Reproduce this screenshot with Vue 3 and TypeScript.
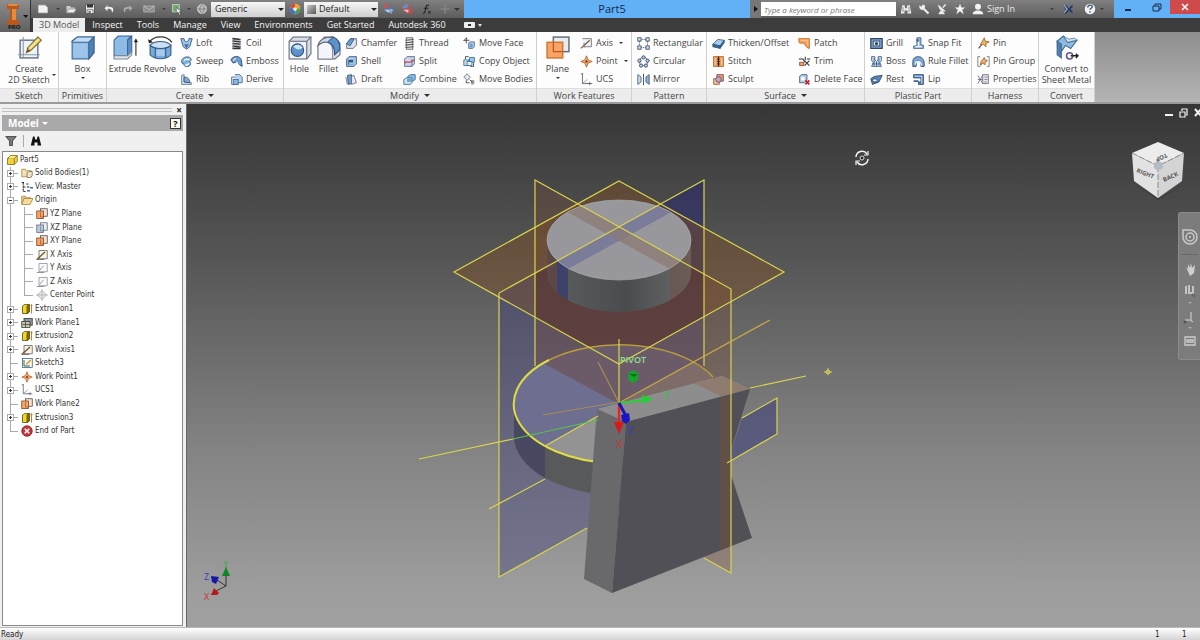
<script setup lang="ts">
import { ref } from 'vue'

interface Tool {
  label: string
  icon: string
  menu?: boolean
  corner?: boolean
}
interface Column {
  big?: boolean
  tools: Tool[]
}
interface Panel {
  id: string
  title: string
  menu?: boolean
  columns: Column[]
}
interface Node {
  label: string
  icon: string
  toggle?: '+' | '-'
  child?: boolean
  last?: boolean
  root?: boolean
}

const icons: Record<string, string> = {
  sketch: '<rect x="3" y="5" width="17" height="17" fill="#eef3f8" stroke="#68788a" stroke-width="1.4"/><path d="M6 2v21M1 19h21" stroke="#8c98a6" fill="none"/><path d="M9 17l1.500-5L20 2l3.500 3L13 15z" fill="#f1cf6b" stroke="#7c6a33"/><path d="M9 17l1.500-5 2.500 3z" fill="#7b4d28"/><path d="M11 14L21 4" stroke="#fff3b8"/>',
  box: '<path d="M2 6l5-4h16v15l-5 6H2z" fill="#7fb0de" stroke="#3c6693"/><path d="M2 6l5-4h16l-5 5H2z" fill="#c2dcf3" stroke="#3c6693"/><path d="M18 7l5-5v15l-5 6z" fill="#4f82b8" stroke="#3c6693"/><path d="M3 8h14v14H3z" fill="#9dc4ea"/>',
  extrude: '<path d="M1 5l4-4h12l-3 4v15H1z" fill="#8dbbe6" stroke="#3c6693"/><path d="M14 5l4-4v15l-4 5z" fill="#5c8fc2" stroke="#3c6693"/><path d="M1 20h13l4-4v3l-4 4H1z" fill="#dde5ec" stroke="#7b8794"/><path d="M22 20V5" fill="none" stroke="#222"/><path d="M20 7l2-4 2 4z" fill="#222"/>',
  revolve: '<path d="M1 7C6 0 18 0 23 7" fill="none" stroke="#333" stroke-width="1.200"/><path d="M0 4l1 4 4-1z" fill="#222"/><path d="M2 10c5 4 15 4 20 0v9c-5 5-15 5-20 0z" fill="#77a9da" stroke="#33597f"/><path d="M2 10c4-5 16-5 20 0-5 4-15 4-20 0z" fill="#c9dff3" stroke="#33597f"/><path d="M7 12v10M17 12v10" stroke="#33597f"/><path d="M8 14h8v6H8z" fill="#a7cbee"/>',
  hole: '<path d="M2 6l4-4h17v16l-4 5H2z" fill="#d5dde6" stroke="#667"/><path d="M2 6h17v17M19 6l4-4" fill="none" stroke="#667"/><path d="M3 7h15v15H3z" fill="#f2f5f8"/><circle cx="10" cy="14.500" r="6" fill="#5d93cc" stroke="#2c4f7a"/><path d="M6 11a6 6 0 0 1 9 1c-3 3-6 2-9-1z" fill="#cfe3f6"/>',
  fillet: '<path d="M2 10l6-8h8l7 6v11l-5 4H2z" fill="#d8dfe7" stroke="#667"/><path d="M2 10c3-2 6-4 9-3 4 1 5 5 5 9v7H2z" fill="#f3f5f8" stroke="#889"/><path d="M11 7l5-5c5 1 7 6 7 12l-5 5c0-6-2-11-7-12z" fill="#5d93cc" stroke="#2c4f7a"/><path d="M2 10c1-5 5-8 14-8l-5 5c-4-1-7 1-9 3z" fill="#c6dbef" stroke="#667"/>',
  plane: '<rect x="8" y="2" width="15" height="14" fill="#e8ecf1" stroke="#5d6d7e" stroke-width="1.400"/><rect x="2" y="7" width="15" height="15" fill="#f6a566" stroke="#d5742c" stroke-width="1.400"/><path d="M8 7v9h9" fill="none" stroke="#c2571a" stroke-width="1.200"/>',
  convert: '<path d="M3 6l6-5 4 6 9-2-6 8-5-3-6 9z" fill="#8db9e2" stroke="#41698f"/><path d="M3 6l4 3v13l-4-3z" fill="#4f7fae" stroke="#41698f"/><path d="M9 1l4 6 9-2-2-2-6 1z" fill="#d3e6f7" stroke="#41698f" stroke-width=".7"/><circle cx="15" cy="20" r="3" fill="#fff" stroke="#63579a" stroke-width="1.500"/><path d="M16 20h7M21 18l2 2-2 2" stroke="#222" stroke-width="1.400" fill="none"/>',
  loft: '<path d="M1 2h4c0 5 6 5 6 0h4l-3 10-4 3-4-3z" fill="#9cc4ea" stroke="#2b4d78"/><path d="M5 9l3 5 3-5" fill="#456f9f"/>',
  sweep: '<path d="M2 7c1-5 9-6 11-3 2 2 0 4-2 4 3 1 3 5-1 6-3 1-6-1-5-3-2 0-4-2-3-4z" fill="#84b1de" stroke="#2b4d78"/><path d="M5 7c2-2 5-2 7-1M6 12c2 1 4 0 5-2" fill="none" stroke="#fff" stroke-width="1.500"/>',
  rib: '<path d="M2 3l3-1v9l9 1v2H2z" fill="#dce4ec" stroke="#556f8b"/><path d="M5 5c5 0 7 3 7 7l-7-1z" fill="#7eaddb" stroke="#2b4d78"/>',
  coil: '<path d="M3 2l10 1M3 5l10 1M3 8l10 1M3 11l10 1M3 14h10" stroke="#333" stroke-width="2"/><path d="M4 3v11M12 3v10" stroke="#889"/>',
  emboss: '<path d="M1 6c3-6 12-5 13 0l1 8-5-3-1-3-5 2z" fill="#6b9ccd" stroke="#23426a"/><path d="M4 7l3-3M8 8l3 5" stroke="#e4f0fa" stroke-width="1.500"/>',
  derive: '<path d="M2 5h8v9H2z" fill="#e6edf4" stroke="#557"/><path d="M6 2h6l3 3v7H9" fill="#b5d2ee" stroke="#3c6693"/><rect x="4" y="8" width="6" height="6" fill="#8ab6e2" stroke="#3c6693"/>',
  chamfer: '<path d="M2 8l5-6h7v8l-4 4H2z" fill="#dbe4ed" stroke="#556"/><path d="M2 8l5-6 4 1-5 8z" fill="#6ea0d1" stroke="#2b4d78"/>',
  shell: '<path d="M2 5l3-3h9v9l-3 3H2z" fill="#a5c6e7" stroke="#2b4d78"/><path d="M4 6h6v6H4z" fill="#2f5586"/><path d="M5 9h5v3H5z" fill="#9dc3ea"/>',
  draft: '<path d="M3 3l5-1v11l-4 1z" fill="#6f9fcf" stroke="#2b4d78"/><path d="M8 4l3-1 3 9-6 2z" fill="#e4eaf0" stroke="#667"/><path d="M1 5l2 9" stroke="#667"/>',
  thread: '<rect x="4" y="1" width="8" height="14" fill="#eee" stroke="#555"/><path d="M3 4l10-1M3 7l10-1M3 10l10-1M3 13l10-1" stroke="#555" stroke-width="1.300"/>',
  split: '<path d="M2 5l3-3h9v9l-3 3H2z" fill="#c4d8ed" stroke="#557"/><path d="M3 6h7v3H3z" fill="#f0d4d8"/><path d="M2 10c3-4 6 2 12-4" stroke="#c04452" fill="none" stroke-width="1.500"/><path d="M11 5v9" stroke="#557"/>',
  combine: '<path d="M6 4l3-2h6v6l-3 2H6z" fill="#8bbbe4" stroke="#2b6a8a"/><path d="M1 8l3-2h7v6l-2 2H1z" fill="#d3e3f2" stroke="#2b6a8a"/><path d="M5 7h5v4H5z" fill="#6aa4d6"/>',
  moveface: '<path d="M7 7l2-1h5v6l-2 2H7z" fill="#bcd6ef" stroke="#3c6693"/><path d="M4 1v7M1 4h7M3 2l1-1 1 1M2 3L1 4l1 1" stroke="#333" fill="none"/><path d="M8 8h4v5H8z" fill="#6fa0d2"/>',
  copy: '<path d="M1 6h6v7H1z" fill="#c9dff3" stroke="#2b6a8a"/><path d="M8 3h6v6H8z" fill="#9cc6ea" stroke="#2b6a8a"/><path d="M3 5V2h4M13 10v4H9" fill="none" stroke="#333"/><path d="M5 8h6v5H5z" fill="#e8f1f9" stroke="#2b6a8a"/>',
  movebodies: '<path d="M5 1l4 4-4 4-4-4z" fill="#e3e8ee" stroke="#667"/><path d="M8 8l5 5M10 10h4M11 9v5M4 9v3h4" stroke="#333" fill="none"/><circle cx="12" cy="12" r="2" fill="#89a" />',
  axis: '<path d="M3 2h11v10H5" fill="#eef1f5" stroke="#667"/><path d="M1 14L12 4" stroke="#7a5a3c" stroke-width="1.600"/><path d="M5 7v6" stroke="#667"/>',
  point: '<path d="M8 1l2 5 5 2-5 2-2 5-2-5-5-2 5-2z" fill="#f0a974" stroke="#b0602a"/><circle cx="8" cy="8" r="1.500" fill="#8b3f12"/>',
  ucs: '<path d="M3 1v12h12" fill="none" stroke="#556"/><path d="M3 13l6-5" stroke="#889"/><path d="M1 1h3M12 11v4M9 12l1 1" stroke="#556"/>',
  rect: '<path d="M3 3h10v10H3z" fill="none" stroke="#556" stroke-dasharray="2 1"/><g fill="#dce8f4" stroke="#2b3f5c"><rect x="1" y="1" width="4" height="4"/><rect x="11" y="1" width="4" height="4"/><rect x="1" y="11" width="4" height="4"/><rect x="11" y="11" width="4" height="4"/></g>',
  circular: '<circle cx="8" cy="8" r="5" fill="none" stroke="#556"/><g fill="#bcd3ea" stroke="#23395c"><circle cx="8" cy="3" r="2"/><circle cx="3" cy="7" r="2"/><circle cx="13" cy="7" r="2"/><circle cx="5" cy="13" r="2"/><circle cx="11" cy="13" r="2"/></g>',
  mirror: '<path d="M1 2l4 3v6l-4 3z" fill="#cfe0f0" stroke="#3c5673"/><path d="M15 2l-4 3v6l4 3z" fill="#8db4dc" stroke="#3c5673"/><path d="M8 1v14" stroke="#333"/>',
  thicken: '<path d="M1 9l6-6 8 1-5 7z" fill="#a9cbec" stroke="#2d5b84"/><path d="M1 9l9 2v3l-9-2zM10 11l5-7v3l-5 7z" fill="#37698f" stroke="#2d5b84"/>',
  stitch: '<rect x="2" y="2" width="12" height="12" fill="#f4a15d" stroke="#b5601f"/><path d="M8 2v12" stroke="#222" stroke-width="1.500"/><path d="M6 5h4M6 8h4M6 11h4" stroke="#333"/><path d="M4 4v8M12 4v8" stroke="#fbd9bb" />',
  sculpt: '<path d="M2 7h7v7H2z" fill="#f6c095" stroke="#a65a2a"/><path d="M6 2h8v8H6z" fill="#f09a63" stroke="#734a55"/><circle cx="8" cy="8" r="3.500" fill="#b3a9c9" stroke="#6b4860"/>',
  patch: '<path d="M1 2h13v12c-4 0-5-5-7-6-3-1-6 1-6-3z" fill="#f5a05a" stroke="#c0621d"/><path d="M3 4h9v6" fill="none" stroke="#fbd0aa"/>',
  trim: '<path d="M1 5h5l3 4M15 5h-4M9 2v4" stroke="#333" fill="none" stroke-width="1.300"/><path d="M2 9h5v4H2z" fill="#f2a56f" stroke="#7b4423"/><path d="M8 7l6 6M8 13l6-6" stroke="#444" stroke-width="1.500"/>',
  delface: '<path d="M2 4l2-2h7v7l-3 3H2z" fill="#b8cfe7" stroke="#35577f"/><path d="M4 5h4v4H4z" fill="#fff"/><path d="M9 9l5 5M14 9l-5 5" stroke="#c4202a" stroke-width="2"/>',
  grill: '<rect x="1" y="2" width="14" height="12" fill="#7fa3cb" stroke="#2c4567" stroke-width="1.500"/><rect x="4" y="5" width="8" height="6" fill="#e3eefa" stroke="#2c4567"/><circle cx="8" cy="8" r="2" fill="#2c4567"/>',
  boss: '<path d="M2 2h4v4l2 2 2-2V2h4v5l-2 2 2 5H2l2-5-2-2z" fill="#cfe0f1" stroke="#35577f"/><path d="M5 4v9M11 4v9M3 11h10M8 8v6" stroke="#35577f"/>',
  rest: '<path d="M1 7l5-3 9-1-4 8-8 3z" fill="#5b8abd" stroke="#1f3d63"/><ellipse cx="6" cy="9" rx="3" ry="2" fill="#e1edf8" stroke="#1f3d63"/>',
  snap: '<path d="M6 1h5v9h3v4H2v-3h4z" fill="#9dc2e8" stroke="#35577f"/><path d="M8 3v8M4 12h8" stroke="#fff" stroke-width="1.400"/><circle cx="7" cy="4" r="2" fill="#4e7aa8"/>',
  rule: '<path d="M1 14V8c0-4 3-6 7-6s7 4 7 8v4h-4c0-5-1-7-5-7l-1 7z" fill="#7aa7d5" stroke="#1f3d63"/><path d="M4 12c0-5 6-6 8 1" fill="none" stroke="#e7f1fb" stroke-width="1.600"/>',
  lip: '<path d="M2 2h12v12H8v-3h3V6H2z" fill="#6290c2" stroke="#1f3d63"/><path d="M3 4h9v9" fill="none" stroke="#e1edf8"/><path d="M2 9h6v2H2z" fill="#35577f"/>',
  pin: '<path d="M2 14l4-5" stroke="#555" stroke-width="1.500"/><path d="M9 1l1 4 5 1-4 2 0 4-3-3-4 1 2-4z" fill="#edb169" stroke="#9d6427"/>',
  pingroup: '<path d="M4 2H1v12h3M12 2h3v12h-3" fill="none" stroke="#69707a"/><path d="M4 13l3-3" stroke="#555"/><path d="M9 3l1 3 3 1-3 2v3l-3-2-3 2 1-4z" fill="#edb169" stroke="#9d6427"/>',
  props: '<path d="M7 2h7v11H7z" fill="#e7ebf0" stroke="#667"/><path d="M9 5h4M9 8h4M9 11h3" stroke="#778"/><path d="M1 3l6 10M7 3L1 13M1 8h6" stroke="#667"/>',
  part: '<path d="M2 6l4-4h9v8l-4 4H2z" fill="#f0d23b" stroke="#7b6512"/><path d="M2 6h9v8M11 6l4-4" fill="none" stroke="#7b6512"/><path d="M3 6l4-3h6l-3 3z" fill="#fff0a0"/>',
  bodies: '<path d="M1 3h5l1 2h7v8H1z" fill="#f3dfae" stroke="#a18240"/><path d="M8 8l2-2h5v5l-2 3H8z" fill="#ece4c4" stroke="#6f6951"/>',
  view: '<path d="M3 2v12h3M3 8h4M1 2h4M7 4h3" stroke="#333" stroke-width="1.500" fill="none" stroke-dasharray="3 1"/><path d="M8 8h3M12 9h4M8 13h4" stroke="#3a6ea5" stroke-width="2"/>',
  folder: '<path d="M1 3h5l1 2h6v2H5l-4 6z" fill="#e9c877" stroke="#a0823b"/><path d="M4 6h12l-4 8H1z" fill="#f6dd9c" stroke="#a0823b"/>',
  tplane: '<rect x="6" y="1" width="9" height="10" fill="#f5e2d3" stroke="#444"/><rect x="1" y="4" width="9" height="10" fill="#f3a76c" stroke="#7d3d12"/><path d="M6 6v6h4" stroke="#b2571c" fill="none"/>',
  tplaneb: '<rect x="6" y="1" width="9" height="10" fill="#e6ebf3" stroke="#667"/><rect x="1" y="4" width="9" height="10" fill="#b9c9de" stroke="#667"/><path d="M6 6v6h4" stroke="#71839c" fill="none"/>',
  taxis: '<path d="M4 2h11v11H4z" fill="#f8f4e8" stroke="#555"/><path d="M1 14L12 4" stroke="#6d5224" stroke-width="1.700"/><path d="M1 14h10" stroke="#555"/>',
  taxisb: '<path d="M4 2h11v11H4z" fill="#fafafa" stroke="#889"/><path d="M5 11l5-6" stroke="#777"/><path d="M1 14h10" stroke="#777"/>',
  cpoint: '<path d="M8 2l6 6-6 6-6-6z" fill="#eee" stroke="#9a9a9a"/><path d="M8 0v16M0 8h16" stroke="#aaa"/>',
  extr: '<path d="M2 4l3-2h6v10l-3 2H2z" fill="#f2d61f" stroke="#4d430a"/><path d="M8 4v10l3-2V2z" fill="#8a7a10" stroke="#4d430a"/><path d="M14 14V3M13 4l1-2 1 2" stroke="#c46a28" stroke-width="1.200" fill="none"/>',
  wplane: '<rect x="4" y="2" width="11" height="9" fill="#8998a6" stroke="#333"/><rect x="1" y="6" width="11" height="8" fill="#c9c39e" stroke="#333"/><path d="M2 10h10M6 6v8" stroke="#345"/>',
  tsketch: '<rect x="2" y="2" width="13" height="12" fill="#fbfbf2" stroke="#335b8a"/><path d="M4 4v8h8" stroke="#2b6a3a" fill="none" stroke-width="1.300"/><path d="M7 10l6-6" stroke="#d69a2a" stroke-width="2.200"/>',
  end: '<circle cx="8" cy="8" r="7" fill="#c8373c" stroke="#6e1216"/><path d="M5 5l6 6M11 5l-6 6" stroke="#fff" stroke-width="2"/>',
  new: '<path d="M2 3h9l3 3v7H2z" fill="#f2f2f2" stroke="#ccc"/>',
  open: '<path d="M2 4h5l1 2h5v2H5l-3 5z" fill="#ccc"/><path d="M5 8h10l-3 5H2z" fill="#eee" stroke="#999"/>',
  save: '<path d="M2 2h12v12H2z" fill="#e8e8e8" stroke="#444"/><path d="M4 2h8v4H4z" fill="#333"/><path d="M4 9h8v5H4z" fill="#fff" stroke="#555"/><path d="M6 11h3v2H6z" fill="#333"/>',
  undo: '<path d="M6 3L2 7l4 4V8c4-1 6 1 6 5 4-5 1-9-6-8z" fill="#eee"/>',
  redo: '<path d="M10 3l4 4-4 4V8c-4-1-6 1-6 5-4-5-1-9 6-8z" fill="#aaa"/>',
  print: '<path d="M1 4h14v8H1z" fill="#8a8a8a" stroke="#bbb"/><path d="M1 4l7 5 7-5" stroke="#ccc" fill="none"/>',
  select: '<path d="M2 2h9v10H2z" fill="#79a878" stroke="#c9e2c5"/><path d="M7 6l7 5-3 1 2 3-2 1-2-4-2 2z" fill="#eee" stroke="#333" stroke-width=".7"/>',
  globe: '<circle cx="8" cy="8" r="6" fill="#bbb" stroke="#e5e5e5"/><path d="M2 8h12M8 2c-4 4-4 8 0 12 4-4 4-8 0-12" stroke="#777" fill="none"/>',
  ball: '<circle cx="8" cy="8" r="7" fill="#eee"/><path d="M8 8L1 6a7 7 0 0 1 7-5z" fill="#d34d3e"/><path d="M8 8V1a7 7 0 0 1 7 6z" fill="#e9a431"/><path d="M8 8l7-1a7 7 0 0 1-6 8z" fill="#47a04a"/><path d="M8 8l1 7a7 7 0 0 1-8-9z" fill="#4472c0"/><circle cx="8" cy="8" r="2.500" fill="#f4e9c8"/>',
  ballb: '<circle cx="8" cy="7" r="6" fill="#5577a9"/><path d="M8 7L2 7a6 6 0 0 1 9-5z" fill="#c25950"/><path d="M3 9h9l-3 4z" fill="#c9cfdb"/><path d="M9 10h6M12 8v6" stroke="#8ab2e2" stroke-width="2"/>',
  ballr: '<circle cx="8" cy="7" r="6" fill="#a85858"/><path d="M8 7L2 7a6 6 0 0 1 9-5z" fill="#688bc2"/><path d="M3 9h9l-3 4z" fill="#d9c9c9"/><path d="M10 9l5 5M15 9l-5 5" stroke="#e04040" stroke-width="2"/>',
  fx: '<path d="M4 14c3 0 3-4 4-8 0-3 2-4 4-3M5 7h6M11 11l3 3M14 11l-3 3" fill="none" stroke="#222" stroke-width="1.400"/>',
  plus: '<path d="M8 2v12M2 8h12" stroke="#858585" stroke-width="2"/>',
  binoc: '<path d="M3 3h3l1 4h2l1-4h3l2 11h-5v-4H6v4H1z" fill="#eee"/><path d="M4 5v7M12 5v7" stroke="#777"/>',
  wrench: '<path d="M2 3l3 2 1-3c3 0 4 2 3 5l6 6-2 2-6-6C3 10 1 7 2 3z" fill="#eee"/>',
  dish: '<path d="M3 2l10 9c-5 2-10-3-10-9zM6 10l-3 5h9l-2-3z" fill="#eee"/><path d="M9 6l4-4" stroke="#eee" stroke-width="2"/>',
  star: '<path d="M8 1l2 5h5l-4 3 2 6-5-4-5 4 2-6-4-3h5z" fill="#f2f2f2"/>',
  user: '<circle cx="8" cy="5" r="4" fill="#f2f2f2"/><path d="M1 15c0-4 3-4 5-5h4c2 1 5 1 5 5z" fill="#f2f2f2"/>',
  exch: '<path d="M2 3h4l3 4 5-5v4l-3 2 3 3v3l-5-4-3 4H2l3-6z" fill="#26396f"/><path d="M3 3l4 5-4 5" fill="none" stroke="#dfe6fa" stroke-width="1.300"/>',
  help: '<circle cx="8" cy="8" r="7" fill="#f2f2f2"/><path d="M5 6c0-4 6-4 6-1 0 2-3 2-3 4M8 11v2" stroke="#3b4f75" stroke-width="1.800" fill="none"/>',
  filter: '<path d="M1 2h14l-5 6v6H6V8z" fill="#777" stroke="#333"/>',
  find: '<path d="M4 2h2l1 4h2l1-4h2l3 12h-5v-4H6v4H1z" fill="#111"/>',
}

const panels: Panel[] = [
  { id: 'sketch', title: 'Sketch', columns: [{ big: true, tools: [{ label: 'Create\n2D Sketch', icon: 'sketch', corner: true }] }] },
  { id: 'prim', title: 'Primitives', columns: [{ big: true, tools: [{ label: 'Box', icon: 'box', menu: true }] }] },
  {
    id: 'create', title: 'Create', menu: true, columns: [
      { big: true, tools: [{ label: 'Extrude', icon: 'extrude' }] },
      { big: true, tools: [{ label: 'Revolve', icon: 'revolve' }] },
      { tools: [{ label: 'Loft', icon: 'loft' }, { label: 'Sweep', icon: 'sweep' }, { label: 'Rib', icon: 'rib' }] },
      { tools: [{ label: 'Coil', icon: 'coil' }, { label: 'Emboss', icon: 'emboss' }, { label: 'Derive', icon: 'derive' }] },
    ],
  },
  {
    id: 'modify', title: 'Modify', menu: true, columns: [
      { big: true, tools: [{ label: 'Hole', icon: 'hole' }] },
      { big: true, tools: [{ label: 'Fillet', icon: 'fillet' }] },
      { tools: [{ label: 'Chamfer', icon: 'chamfer' }, { label: 'Shell', icon: 'shell' }, { label: 'Draft', icon: 'draft' }] },
      { tools: [{ label: 'Thread', icon: 'thread' }, { label: 'Split', icon: 'split' }, { label: 'Combine', icon: 'combine' }] },
      { tools: [{ label: 'Move Face', icon: 'moveface' }, { label: 'Copy Object', icon: 'copy' }, { label: 'Move Bodies', icon: 'movebodies' }] },
    ],
  },
  {
    id: 'work', title: 'Work Features', columns: [
      { big: true, tools: [{ label: 'Plane', icon: 'plane', menu: true }] },
      { tools: [{ label: 'Axis', icon: 'axis', menu: true }, { label: 'Point', icon: 'point', menu: true }, { label: 'UCS', icon: 'ucs' }] },
    ],
  },
  {
    id: 'pattern', title: 'Pattern', columns: [
      { tools: [{ label: 'Rectangular', icon: 'rect' }, { label: 'Circular', icon: 'circular' }, { label: 'Mirror', icon: 'mirror' }] },
    ],
  },
  {
    id: 'surface', title: 'Surface', menu: true, columns: [
      { tools: [{ label: 'Thicken/Offset', icon: 'thicken' }, { label: 'Stitch', icon: 'stitch' }, { label: 'Sculpt', icon: 'sculpt' }] },
      { tools: [{ label: 'Patch', icon: 'patch' }, { label: 'Trim', icon: 'trim' }, { label: 'Delete Face', icon: 'delface' }] },
    ],
  },
  {
    id: 'plastic', title: 'Plastic Part', columns: [
      { tools: [{ label: 'Grill', icon: 'grill' }, { label: 'Boss', icon: 'boss' }, { label: 'Rest', icon: 'rest' }] },
      { tools: [{ label: 'Snap Fit', icon: 'snap' }, { label: 'Rule Fillet', icon: 'rule' }, { label: 'Lip', icon: 'lip' }] },
    ],
  },
  {
    id: 'harness', title: 'Harness', columns: [
      { tools: [{ label: 'Pin', icon: 'pin' }, { label: 'Pin Group', icon: 'pingroup' }, { label: 'Properties', icon: 'props' }] },
    ],
  },
  { id: 'convert', title: 'Convert', columns: [{ big: true, tools: [{ label: 'Convert to\nSheet Metal', icon: 'convert' }] }] },
]

const tabs = ['3D Model', 'Inspect', 'Tools', 'Manage', 'View', 'Environments', 'Get Started', 'Autodesk 360']
const activeTab = ref('3D Model')

const nodes: Node[] = [
  { label: 'Part5', icon: 'part', root: true },
  { label: 'Solid Bodies(1)', icon: 'bodies', toggle: '+' },
  { label: 'View: Master', icon: 'view', toggle: '+' },
  { label: 'Origin', icon: 'folder', toggle: '-' },
  { label: 'YZ Plane', icon: 'tplane', child: true },
  { label: 'XZ Plane', icon: 'tplaneb', child: true },
  { label: 'XY Plane', icon: 'tplane', child: true },
  { label: 'X Axis', icon: 'taxis', child: true },
  { label: 'Y Axis', icon: 'taxisb', child: true },
  { label: 'Z Axis', icon: 'taxisb', child: true },
  { label: 'Center Point', icon: 'cpoint', child: true, last: true },
  { label: 'Extrusion1', icon: 'extr', toggle: '+' },
  { label: 'Work Plane1', icon: 'wplane', toggle: '+' },
  { label: 'Extrusion2', icon: 'extr', toggle: '+' },
  { label: 'Work Axis1', icon: 'taxis', toggle: '+' },
  { label: 'Sketch3', icon: 'tsketch' },
  { label: 'Work Point1', icon: 'point', toggle: '+' },
  { label: 'UCS1', icon: 'ucs', toggle: '+' },
  { label: 'Work Plane2', icon: 'tplane' },
  { label: 'Extrusion3', icon: 'extr', toggle: '+' },
  { label: 'End of Part', icon: 'end', last: true },
]

const material = ref('Generic')
const appearance = ref('Default')
const query = ref('')
</script>

<template>
  <div class="app">
    <header class="top">
      <button class="app-button" aria-label="Application menu">
        <svg viewBox="0 0 30 31" class="app-logo">
          <path d="M7 3h12v5h-3v11h3v5H7v-5h3V8H7z" fill="#b8581c" />
          <path d="M7 3h12l-2 2H9zM12 8h4v11h-4z" fill="#e58a3c" />
          <path d="M23 14h5l-2 3z" fill="#111" />
        </svg>
        <span class="app-edition">PRO</span>
      </button>
      <div class="bars">
        <div class="title-bar">
          <div class="quick">
            <button class="q wide" aria-label="New"><svg viewBox="0 0 16 16" v-html="icons.new" /></button>
            <i class="caret dim" />
            <button class="q" aria-label="Open"><svg viewBox="0 0 16 16" v-html="icons.open" /></button>
            <button class="q" aria-label="Save"><svg viewBox="0 0 16 16" v-html="icons.save" /></button>
            <button class="q" aria-label="Undo"><svg viewBox="0 0 16 16" v-html="icons.undo" /></button>
            <button class="q" aria-label="Redo"><svg viewBox="0 0 16 16" v-html="icons.redo" /></button>
            <button class="q wide" aria-label="Print"><svg viewBox="0 0 16 16" v-html="icons.print" /></button>
            <i class="caret dim" />
            <button class="q" aria-label="Select"><svg viewBox="0 0 16 16" v-html="icons.select" /></button>
            <i class="caret dim" />
            <button class="q" aria-label="Material browser"><svg viewBox="0 0 16 16" v-html="icons.globe" /></button>
            <span class="pick">
              <select v-model="material" aria-label="Material"><option>Generic</option></select>
            </span>
            <button class="q" aria-label="Appearance browser"><svg viewBox="0 0 16 16" v-html="icons.ball" /></button>
            <span class="pick swatch">
              <select v-model="appearance" aria-label="Appearance"><option>Default</option></select>
            </span>
            <button class="q" aria-label="Adjust"><svg viewBox="0 0 16 16" v-html="icons.ballb" /></button>
            <button class="q" aria-label="Clear"><svg viewBox="0 0 16 16" v-html="icons.ballr" /></button>
            <button class="q" aria-label="Parameters"><svg viewBox="0 0 16 16" v-html="icons.fx" /></button>
            <button class="q" aria-label="Add"><svg viewBox="0 0 16 16" v-html="icons.plus" /></button>
            <i class="caret" />
          </div>
          <h1 class="doc">Part5</h1>
          <div class="info">
            <button class="expand" aria-label="Collapse search"><svg viewBox="0 0 11 18"><path d="M4 6l4 3-4 3z" fill="#111" /></svg></button>
            <input v-model="query" class="search" type="text" placeholder="Type a keyword or phrase" aria-label="Search help" />
            <button class="q" aria-label="Search"><svg viewBox="0 0 16 16" v-html="icons.binoc" /></button>
            <button class="q" aria-label="Tools"><svg viewBox="0 0 16 16" v-html="icons.wrench" /></button>
            <button class="q" aria-label="Communication"><svg viewBox="0 0 16 16" v-html="icons.dish" /></button>
            <button class="q" aria-label="Favorites"><svg viewBox="0 0 16 16" v-html="icons.star" /></button>
            <button class="sign"><svg viewBox="0 0 16 16" v-html="icons.user" />Sign In</button>
            <i class="caret dim" />
            <button class="q exchange" aria-label="Exchange apps"><svg viewBox="0 0 16 16" v-html="icons.exch" /></button>
            <button class="q" aria-label="Help"><svg viewBox="0 0 16 16" v-html="icons.help" /></button>
            <i class="caret dim" />
          </div>
          <div class="window">
            <button aria-label="Minimize"><svg viewBox="0 0 20 18"><path d="M7 10h6" stroke="#1b2b47" stroke-width="2" /></svg></button>
            <button aria-label="Restore"><svg viewBox="0 0 20 18"><path d="M7 6h6v5H7zM9 6V4h6v5h-2" fill="none" stroke="#1b2b47" /></svg></button>
            <button class="close" aria-label="Close"><svg viewBox="0 0 20 14"><path d="M7 4l6 6M13 4l-6 6" stroke="#fff" stroke-width="1.500" /></svg></button>
          </div>
        </div>
        <nav class="tabs">
          <button v-for="t in tabs" :key="t" :class="{ active: t === activeTab }" @click="activeTab = t">{{ t }}</button>
          <button class="ribbon-mode" aria-label="Ribbon display">
            <svg viewBox="0 0 20 8"><rect x="0" y="1" width="11" height="6" rx="1" fill="#eee" /><rect x="4" y="3" width="3" height="2" fill="#333" /><path d="M14 3h4l-2 3z" fill="#ddd" /></svg>
          </button>
        </nav>
      </div>
    </header>

    <div class="ribbon">
      <section v-for="p in panels" :key="p.id" class="panel" :class="p.id">
        <div class="tools">
          <div v-for="(c, i) in p.columns" :key="i" class="column">
            <button v-for="t in c.tools" :key="t.label" :class="c.big ? 'big' : 'small'">
              <svg :viewBox="c.big ? '0 0 24 24' : '0 0 16 16'" v-html="icons[t.icon]" />
              <span>{{ t.label }}</span>
              <i v-if="t.menu" class="caret" />
              <i v-if="t.corner" class="caret corner" />
            </button>
          </div>
        </div>
        <h2>{{ p.title }}<i v-if="p.menu" class="caret" /></h2>
      </section>
    </div>

    <main class="body">
      <aside class="browser">
        <div class="grip"><i /><button aria-label="Close browser">×</button></div>
        <div class="browser-head">
          <button class="model">Model<i class="caret" /></button>
          <button class="ask" aria-label="Help">?</button>
        </div>
        <div class="browser-tools">
          <button aria-label="Filter"><svg viewBox="0 0 16 16" v-html="icons.filter" /></button>
          <i />
          <button aria-label="Find"><svg viewBox="0 0 16 16" v-html="icons.find" /></button>
        </div>
        <div class="tree-box">
          <ul class="tree">
            <li v-for="n in nodes" :key="n.label" :class="{ child: n.child, last: n.last, root: n.root }">
              <span v-if="!n.root" class="gutter">
                <button v-if="n.toggle" class="toggle" :aria-label="'Toggle ' + n.label">
                  <svg viewBox="0 0 7 7"><path d="M2 3.500h3" stroke="#333" /><path v-if="n.toggle === '+'" d="M3.500 2v3" stroke="#333" /></svg>
                </button>
              </span>
              <span v-if="n.child" class="branch" />
              <svg class="node-icon" viewBox="0 0 16 16" v-html="icons[n.icon]" />
              <span class="node-label">{{ n.label }}</span>
            </li>
          </ul>
        </div>
      </aside>

      <section class="view" aria-label="Model view">
        <svg class="scene" viewBox="187 104 1013 523" preserveAspectRatio="xMidYMid meet">
          <defs>
            <clipPath id="cap"><ellipse cx="619" cy="240" rx="72" ry="40" /></clipPath>
            <clipPath id="wall"><path d="M547 240v32a72 40 0 0 0 144 0v-32a72 40 0 0 1-144 0z" /></clipPath>
            <clipPath id="disk"><ellipse cx="619" cy="404" rx="105" ry="59" /></clipPath>
            <clipPath id="rim"><path d="M514 404v32a105 59 0 0 0 105 59v-32a105 59 0 0 1-105-59z" /></clipPath>
            <linearGradient id="side" x1="0" x2="1"><stop offset="0" stop-color="#5c5e60" /><stop offset=".55" stop-color="#494c4e" /><stop offset="1" stop-color="#6a6a6a" /></linearGradient>
          </defs>

          <path d="M704 180L499 293V577L597 523L704 463z" fill="#41417c" fill-opacity=".42" />
          <path d="M704 180L619 227L704 275z" fill="#24245c" fill-opacity=".4" />
          <path d="M535 180L731 289V573L704 558V420L535 366z" fill="#7c4a34" fill-opacity=".3" />
          <path d="M619 181L784 272L619 364L454 272z" fill="#84501e" fill-opacity=".38" />
          <path d="M535 274L619 227L704 274V317L619 364L535 317z" fill="#4c3038" fill-opacity=".5" />

          <path d="M547 240v32a72 40 0 0 0 144 0v-32z" fill="url(#side)" />
          <g clip-path="url(#wall)">
            <path d="M547 240h10v80h-10z" fill="#5c4444" fill-opacity=".8" />
            <path d="M557 240h11v80h-11z" fill="#3b3f6c" fill-opacity=".9" />
            <path d="M670 240h24v80h-24z" fill="#6c5348" fill-opacity=".6" />
          </g>
          <ellipse cx="619" cy="240" rx="72" ry="40" fill="#98979b" />
          <g clip-path="url(#cap)">
            <path d="M704 180L499 293V307L704 194z" fill="#72729a" fill-opacity=".75" />
            <path d="M535 180L731 289V303L535 194z" fill="#8b7a74" fill-opacity=".75" />
          </g>
          <ellipse cx="619" cy="240" rx="72" ry="40" fill="none" stroke="#acacac" stroke-width=".7" />

          <path d="M514 404v32a105 59 0 0 0 105 59v-90z" fill="#58595a" />
          <g clip-path="url(#rim)"><path d="M513 400h32v100h-32z" fill="#484860" /></g>
          <ellipse cx="619" cy="404" rx="105" ry="59" fill="#6b5b69" />
          <g clip-path="url(#disk)">
            <path d="M500 340L619 404L500 471z" fill="#6e6e90" />
            <path d="M619 404L500 471H640z" fill="#939394" />
            <path d="M619 404L735 338V440z" fill="#7e6c68" />
          </g>
          <path d="M549 360A105 59 0 0 1 713 377" fill="none" stroke="#b99a3c" stroke-width="1.500" />
          <path d="M549 360A105 59 0 0 0 613 463" fill="none" stroke="#e0de44" stroke-width="2" />

          <path d="M742 418L777 398V434L727 463z" fill="#50507c" fill-opacity=".8" />
          <path d="M597 409L722 376L750 389L626 422z" fill="#8d8d8e" />
          <path d="M694 383L722 376L750 389L722 397z" fill="#8e7c70" />
          <path d="M597 409L626 422L612 593L584 579z" fill="#69696b" />
          <path d="M626 422L750 389L727 463L752 538L612 593z" fill="#515057" />
          <path d="M720 398L731 395V546L720 550z" fill="#605048" />

          <g fill="none" stroke="#d8d44e" stroke-width="1.200">
            <path d="M742 418L777 398V434L727 463" />
            <path d="M535 366V180L731 289V573L704 558" />
            <path d="M704 366V180L499 293V577L587 528" />
            <path d="M619 181L784 272L619 364L454 272z" />
            <path d="M619 339V403M489 509L545 479M545 446L598 416M419 459L513 439M750 388L806 376" />
            <path d="M619 403L770 320" stroke="#c9a947" />
            <path d="M543 415L619 402M598 362L619 403" stroke="#a88b55" />
            <path d="M513 439L598 420" stroke="#5ac24c" />
          </g>
          <circle cx="828" cy="372" r="2" fill="none" stroke="#d4d05a" /><path d="M828 368v7M824 372h8" stroke="#d4d05a" />

          <path d="M628 374l5-4 6 4-2 7-5 2-4-4z" fill="#16a52c" /><path d="M629 374h9l-4 3z" fill="#0c6c1c" />
          <path d="M619 403L645 400" stroke="#27d236" stroke-width="2" /><path d="M642 395l11 4-10 5z" fill="#1fd331" />
          <path d="M619 403V424" stroke="#e22" stroke-width="2.500" /><path d="M614 422h10l-5 12z" fill="#d51a1a" />
          <path d="M619 403L626 416" stroke="#1717b8" stroke-width="3" /><path d="M621 415l8-2 1 7-4 4-4-3z" fill="#1717c4" />
          <g class="axis-text">
            <text x="620" y="363" fill="#8be08d">PIVOT</text>
            <text x="664" y="399" fill="#4fb656" class="letter">Y</text>
            <text x="628" y="434" fill="#3d3db4" class="letter">Z</text>
            <text x="616" y="448" fill="#b84040" class="letter">X</text>
          </g>
          <g fill="none" stroke="#f4f4f4" stroke-width="1.500">
            <path d="M856 157a6 6 0 0 1 11-3M868 159a6 6 0 0 1-11 3" />
            <path d="M868 151v4h-4M856 165v-4h4" stroke-width="1.200" />
          </g>
          <circle cx="862" cy="158" r="2" fill="#222" stroke="#ddd" />
        </svg>

        <div class="doc-window">
          <button aria-label="Minimize document"><svg viewBox="0 0 12 12"><path d="M1 8h8" stroke="#f4f4f4" stroke-width="2" /></svg></button>
          <button aria-label="Restore document"><svg viewBox="0 0 12 12"><path d="M2 5h5v5H2zM4 4V2h5v6H8" fill="none" stroke="#f4f4f4" stroke-width="1.200" /></svg></button>
          <button aria-label="Close document"><svg viewBox="0 0 12 12"><path d="M3 2l6 7M9 2L3 9" stroke="#f4f4f4" stroke-width="2" /></svg></button>
        </div>
        <svg class="cube" viewBox="0 0 60 64">
          <path d="M4 43l26 18 26-16-26 15z" fill="#222" opacity=".5" />
          <path d="M4 14L30 3L56 14L30 27z" fill="#ececec" />
          <path d="M4 14L30 27V59L6 42z" fill="#e2e2e2" />
          <path d="M56 14L30 27V59L54 42z" fill="#d4d4d4" />
          <path d="M4 14L30 27L56 14M30 27V59" fill="none" stroke="#8c8c8c" stroke-dasharray="6 2" />
          <path d="M26 24l4-2 5 2v5l-5 3-4-3z" fill="#b4bcc2" />
          <text x="8" y="33" transform="rotate(22 8 33)">RIGHT</text>
          <text x="36" y="43" transform="rotate(-24 36 43)">BACK</text>
          <text x="38" y="14" transform="rotate(155 38 14)">TOP</text>
        </svg>
        <div class="nav-bar">
          <button aria-label="Steering wheel"><svg viewBox="0 0 20 24"><path d="M4 5h7a7 7 0 1 1-7 7z" fill="none" stroke="#c9c9c9" stroke-width="1.500" /><circle cx="11" cy="12" r="4" fill="none" stroke="#c9c9c9" stroke-width="1.500" /><circle cx="11" cy="12" r="1" fill="#c9c9c9" /></svg></button>
          <i />
          <button aria-label="Pan"><svg viewBox="0 0 20 24"><path d="M7 10l2 2 0-5 2 4 1-5 1 5 3-3-1 8-4 3z" fill="#cfcfcf" /></svg></button>
          <button aria-label="Zoom"><svg viewBox="0 0 20 24"><path d="M7 5v8M10 4v8h4V5" fill="none" stroke="#c4c4c4" stroke-width="2" /><path d="M13 13l3 3" stroke="#666" stroke-width="2" /><path d="M9 21h4l-2 2z" fill="#aaa" /></svg></button>
          <button aria-label="Orbit"><svg viewBox="0 0 20 24"><path d="M12 7v8H6M14 17l-3-2" fill="none" stroke="#bbb" stroke-width="1.500" /><circle cx="6" cy="17" r="1.500" fill="#555" /><path d="M9 22h4l-2 2z" fill="#aaa" /></svg></button>
          <button aria-label="Look at"><svg viewBox="0 0 20 24"><path d="M6 8h10v8H6zM8 11h6v2H8z" fill="none" stroke="#ccc" stroke-width="1.300" /></svg></button>
        </div>
        <svg class="triad" viewBox="0 0 40 48">
          <path d="M28 33V18M28 33L16 25M28 33L18 38" stroke="#333" fill="none" />
          <path d="M26 8l2 3 2-3M28 11v5" stroke="#34b044" fill="none" />
          <path d="M28 14l4 9h-8z" fill="#0e8424" />
          <path d="M13 23l8 1-3 7-4-2z" fill="#1717a8" />
          <path d="M13 42l3-7 5 5-2 2z" fill="#b81818" />
          <text x="6" y="27" fill="#3a3ab8">Z</text>
          <text x="6" y="47" fill="#d03030">X</text>
        </svg>
      </section>
    </main>

    <footer class="status"><span>Ready</span><span class="count">1</span><span class="count">1</span></footer>
  </div>
</template>

<style>
body {
  margin: 0;
}
</style>

<style scoped>
.app {
  display: flex;
  flex-direction: column;
  height: 100vh;
  overflow: hidden;
  background: #f0f0f0;
  font-family: "Open Sans", "Noto Sans", sans-serif;
  font-size: 9px;
  line-height: 12px;
  color: #444;
}
button,
input,
select {
  margin: 0;
  padding: 0;
  border: 0;
  background: none;
  font: inherit;
  color: inherit;
}
svg {
  display: block;
  flex: none;
}
h1,
h2,
ul {
  margin: 0;
  padding: 0;
  font-weight: 400;
  list-style: none;
}
.caret {
  flex: none;
  border: 3px solid transparent;
  border-top-color: #333;
  border-bottom: 0;
}
.caret.dim {
  margin: 0 1px;
  border-width: 2px;
  border-bottom: 0;
  border-top-color: #3a3a3a;
}

.top {
  display: flex;
  background: #3c3c3c;
}
.app-button {
  position: relative;
  width: 31px;
  background: linear-gradient(#8e8e8e, #5f5f5f);
  border-right: 1px solid #333;
}
.app-logo {
  width: 30px;
  height: 31px;
}
.app-edition {
  position: absolute;
  left: 8px;
  bottom: 1px;
  font-size: 6px;
  font-weight: 700;
  line-height: 7px;
  color: #161616;
}
.bars {
  flex: 1;
  min-width: 0;
}
.title-bar {
  display: flex;
  height: 18px;
  background: linear-gradient(#808080, #5c5c5c);
}
.quick,
.info {
  display: flex;
  align-items: center;
  flex: none;
}
.quick {
  width: 433px;
}
.q {
  display: flex;
  justify-content: center;
  width: 18px;
}
.quick .q {
  width: 19px;
}
.quick .q.wide {
  width: 24px;
}
.q svg,
.sign svg {
  width: 12px;
  height: 12px;
}
.pick {
  position: relative;
  width: 74px;
  height: 15px;
}
.pick select {
  width: 100%;
  height: 15px;
  padding-left: 4px;
  appearance: none;
  background: linear-gradient(#f6f6f6, #cfcfcf);
  color: #222;
  line-height: 14px;
}
.pick::after {
  content: "";
  position: absolute;
  right: 1px;
  top: 6px;
  border: 3px solid transparent;
  border-top-color: #222;
  border-bottom: 0;
}
.pick.swatch select {
  padding-left: 15px;
}
.pick.swatch::before {
  content: "";
  position: absolute;
  left: 3px;
  top: 3px;
  width: 9px;
  height: 9px;
  background: linear-gradient(135deg, #ccc, #555);
}
.doc {
  flex: 1;
  padding-left: 10px;
  background: #62b0f6;
  color: #12294a;
  font-size: 11px;
  line-height: 18px;
  text-align: center;
}
.info {
  width: 364px;
}
.expand {
  width: 11px;
  background: #777;
}
.search {
  width: 135px;
  height: 14px;
  margin-right: 1px;
  padding-left: 3px;
  box-sizing: border-box;
  background: #fff;
  font-size: 8px;
  font-style: italic;
}
.search::placeholder {
  color: #777;
}
.sign {
  display: flex;
  align-items: center;
  gap: 3px;
  width: 80px;
  padding-left: 3px;
  color: #eee;
}
.exchange {
  width: 26px;
}
.window {
  display: flex;
  width: 86px;
  background: #62b0f6;
}
.window button {
  display: flex;
  justify-content: center;
  flex: 1;
}
.window svg {
  width: 20px;
  height: 18px;
}
.window .close {
  flex: none;
  width: 30px;
  height: 14px;
  background: #cf4b4b;
}
.window .close svg {
  height: 14px;
}
.tabs {
  display: flex;
  height: 14px;
  padding-left: 2px;
  background: #3c3c3c;
  color: #f4f4f4;
}
.tabs button {
  padding: 0 7px;
  line-height: 14px;
  white-space: nowrap;
}
.tabs .active {
  padding: 0 6px;
  background: #ededed;
  color: #555;
}
.tabs .ribbon-mode {
  display: flex;
  align-items: center;
  padding-left: 11px;
}
.ribbon-mode svg {
  width: 20px;
  height: 8px;
}

.ribbon {
  display: grid;
  grid-template-columns: 59px 48px 177px 253px 95px 75px 158px 107px 67px 56px;
  background: linear-gradient(#8e8e8e, #b4b4b4);
  border-bottom: 2px solid #9a9a9a;
}
.panel {
  display: flex;
  flex-direction: column;
  background: #fdfdfd;
  border-right: 1px solid #cfcfcf;
  box-sizing: border-box;
  height: 70px;
}
.panel h2 {
  display: flex;
  align-items: center;
  justify-content: center;
  gap: 5px;
  height: 14px;
  background: #ececec;
  border-top: 1px solid #dedede;
  box-sizing: border-box;
  font-size: 9px;
  line-height: 12px;
}
.tools {
  display: grid;
  flex: 1;
  padding-top: 2px;
  align-items: start;
  justify-content: start;
}
.sketch .tools,
.prim .tools,
.convert .tools {
  justify-content: stretch;
}
.create .tools {
  padding-left: 1px;
  grid-template-columns: 34px 36px 50px 50px;
}
.modify .tools {
  padding-left: 1px;
  grid-template-columns: 29px 29px 58px 60px 72px;
}
.work .tools {
  grid-template-columns: 41px 50px;
}
.pattern .tools {
  padding-left: 3px;
}
.surface .tools {
  padding-left: 3px;
  grid-template-columns: 86px 66px;
}
.plastic .tools {
  padding-left: 3px;
  grid-template-columns: 42px 60px;
}
.harness .tools {
  padding-left: 3px;
}
.small {
  display: flex;
  align-items: center;
  gap: 3px;
  height: 18px;
  padding-left: 2px;
  white-space: nowrap;
}
.small svg {
  width: 13px;
  height: 13px;
}
.small .caret,
.big .caret {
  border-width: 2px;
  border-bottom: 0;
}
.small .caret {
  margin-left: 3px;
}
.big {
  position: relative;
  display: flex;
  flex-direction: column;
  align-items: center;
  width: 100%;
  padding-top: 1px;
  line-height: 11px;
  white-space: pre;
}
.big svg {
  width: 25px;
  height: 25px;
  margin-bottom: 3px;
}
.big .caret {
  margin-top: 3px;
}
.big .corner {
  position: absolute;
  right: 2px;
  bottom: 9px;
}

.body {
  display: flex;
  flex: 1;
  min-height: 0;
}
.browser {
  display: flex;
  flex-direction: column;
  flex: none;
  width: 187px;
  padding: 0 3px 1px 2px;
  box-sizing: border-box;
  border-right: 1px solid #666;
}
.grip {
  display: flex;
  align-items: center;
  gap: 3px;
  height: 11px;
}
.grip i {
  flex: 1;
  height: 2px;
  border: solid #c2c2c2;
  border-width: 1px 0;
}
.grip button {
  width: 8px;
  font-size: 10px;
  font-weight: 700;
  line-height: 10px;
  color: #222;
}
.browser-head {
  display: flex;
  align-items: center;
  justify-content: space-between;
  height: 16px;
  padding: 0 2px 0 6px;
  background: #a9a9a9;
}
.model {
  display: flex;
  align-items: center;
  gap: 3px;
  color: #fff;
  font-size: 10px;
  font-weight: 700;
}
.model .caret {
  border-top-color: #fff;
}
.ask {
  width: 11px;
  height: 11px;
  border: 1px solid #333;
  background: #fbfbee;
  color: #111;
  font-weight: 700;
  line-height: 9px;
}
.browser-tools {
  display: flex;
  align-items: center;
  gap: 6px;
  height: 20px;
  padding-left: 3px;
}
.browser-tools svg {
  width: 12px;
  height: 12px;
}
.browser-tools i {
  width: 1px;
  height: 12px;
  background: #aaa;
}
.tree-box {
  flex: 1;
  padding-top: 1px;
  background: #fff;
  border: 1px solid #8a8a8a;
}
.tree {
  display: grid;
  grid-auto-rows: 1fr;
  height: 285px;
  font-family: "DejaVu Sans Condensed", "DejaVu Sans", sans-serif;
  font-size: 8px;
  color: #333;
}
.tree li {
  display: flex;
  align-items: center;
  min-height: 0;
}
.tree li.root {
  padding-left: 3px;
}
.gutter,
.branch {
  position: relative;
  align-self: stretch;
  width: 18px;
  background:
    linear-gradient(#aaa, #aaa) 7px 0 / 1px 100% no-repeat,
    linear-gradient(#aaa, #aaa) 7px 50% / 8px 1px no-repeat;
}
.branch {
  width: 15px;
  background:
    linear-gradient(#aaa, #aaa) 3px 0 / 1px 100% no-repeat,
    linear-gradient(#aaa, #aaa) 3px 50% / 9px 1px no-repeat;
}
.child .gutter {
  background: linear-gradient(#aaa, #aaa) 7px 0 / 1px 100% no-repeat;
}
.last:not(.child) .gutter {
  background-size: 1px 50%, 8px 1px;
}
.last .branch {
  background-size: 1px 50%, 9px 1px;
}
.gutter {
  display: flex;
  align-items: center;
  padding-left: 4px;
  box-sizing: border-box;
}
.toggle svg {
  width: 7px;
  height: 7px;
  background: #fff;
  outline: 1px solid #aaa;
  outline-offset: -1px;
}
.node-icon {
  width: 12px;
  height: 12px;
}
.node-label {
  padding-left: 2px;
  white-space: nowrap;
}

.view {
  position: relative;
  flex: 1;
  min-width: 0;
  background: linear-gradient(#363636, #565656 30%, #828282 65%, #9e9e9e 94%, #a0a0a0);
  overflow: hidden;
}
.scene {
  width: 100%;
  height: 100%;
}
.axis-text {
  font-size: 9px;
  font-weight: 600;
}
.letter {
  font-size: 10px;
}
.doc-window {
  position: absolute;
  top: 3px;
  right: -4px;
  display: flex;
  gap: 2px;
}
.doc-window svg {
  width: 12px;
  height: 12px;
}
.cube {
  position: absolute;
  top: 35px;
  right: 12px;
  width: 60px;
  height: 64px;
  font-size: 6px;
  font-weight: 700;
  fill: #555;
}
.nav-bar {
  position: absolute;
  top: 108px;
  right: 0;
  display: flex;
  flex-direction: column;
  width: 22px;
  height: 148px;
  padding-top: 12px;
  box-sizing: border-box;
  border: 1px solid #8c8c8c;
  border-right: 0;
  border-radius: 3px 0 0 3px;
  background: #7c7c7c;
}
.nav-bar svg {
  width: 20px;
  height: 24px;
}
.nav-bar i {
  height: 1px;
  margin: 5px 2px 2px;
  background: #6a6a6a;
}
.triad {
  position: absolute;
  left: 11px;
  bottom: 26px;
  width: 40px;
  height: 48px;
  font-size: 9px;
  overflow: visible;
}
.status {
  display: flex;
  height: 13px;
  padding: 2px 13px 0 1px;
  box-sizing: border-box;
  background: linear-gradient(#fff, #d4d4d4);
  border-top: 1px solid #b8b8b8;
  font-family: "DejaVu Sans Condensed", "DejaVu Sans", sans-serif;
  font-size: 8px;
  line-height: 10px;
  color: #222;
}
.status span:first-child {
  flex: 1;
}
.count {
  width: 5px;
}
.count + .count {
  padding-left: 22px;
}
</style>
